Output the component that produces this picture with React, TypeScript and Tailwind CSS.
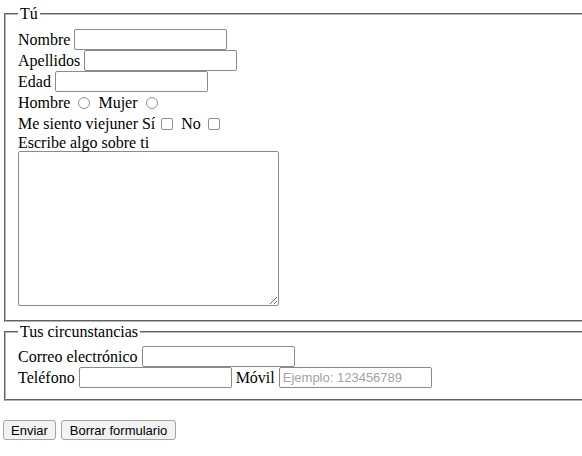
const field = "h-[21px] w-[153px] border border-[#8a8a8a] rounded-[2px] bg-white px-[3px] text-[13px] outline-none"

const radio = "appearance-none w-[12px] h-[12px] rounded-full border border-[#8e8e8e] bg-white"
const check = "appearance-none w-[12px] h-[12px] rounded-[2px] border border-[#8e8e8e] bg-white"

const Row = ({ children }: { children: React.ReactNode }) => (
  <div className="flex items-center h-[21px] whitespace-nowrap">{children}</div>
)

export default function App() {
  return (
    <div className="w-[582px] h-[456px] overflow-hidden bg-white text-black text-[16px] leading-[18px] font-['Liberation_Serif','Times_New_Roman',serif]">
      <form>
        <fieldset className="ml-[4px] mt-[5px] w-[640px] border-2 border-[#b5b5b5] [border-style:groove] pl-[12px] pt-[6px] pb-[14px]">
          <legend className="px-[2px]">Tú</legend>
          <Row>
            <label htmlFor="nombre">Nombre</label>
            <input id="nombre" type="text" className={`ml-[4px] ${field}`} />
          </Row>
          <Row>
            <label htmlFor="apellidos">Apellidos</label>
            <input id="apellidos" type="text" className={`ml-[4px] ${field}`} />
          </Row>
          <Row>
            <label htmlFor="edad">Edad</label>
            <input id="edad" type="text" className={`ml-[4px] ${field}`} />
          </Row>
          <Row>
            <span>Hombre</span>
            <input type="radio" name="sexo" className={`ml-[8px] ${radio}`} />
            <span className="ml-[8px]">Mujer</span>
            <input type="radio" name="sexo" className={`ml-[8px] ${radio}`} />
          </Row>
          <Row>
            <span>Me siento viejuner Sí</span>
            <input type="checkbox" className={`ml-[6px] ${check}`} />
            <span className="ml-[8px]">No</span>
            <input type="checkbox" className={`ml-[7px] ${check}`} />
          </Row>
          <div className="h-[17px] leading-[17px]">
            <label htmlFor="sobre">Escribe algo sobre ti</label>
          </div>
          <textarea
            id="sobre"
            className="block w-[261px] h-[155px] border border-[#8a8a8a] rounded-[2px] bg-white outline-none"
          />
        </fieldset>

        <fieldset className="ml-[4px] mt-[1px] w-[640px] border-2 border-[#b5b5b5] [border-style:groove] pl-[12px] pt-[5px] pb-[11px]">
          <legend className="px-[2px]">Tus circunstancias</legend>
          <Row>
            <label htmlFor="correo">Correo electrónico</label>
            <input id="correo" type="email" className={`ml-[4px] ${field}`} />
          </Row>
          <Row>
            <label htmlFor="telefono">Teléfono</label>
            <input id="telefono" type="tel" className={`ml-[4px] ${field}`} />
            <label htmlFor="movil" className="ml-[4px]">Móvil</label>
            <input
              id="movil"
              type="tel"
              placeholder="Ejemplo: 123456789"
              className={`ml-[4px] ${field} font-['Liberation_Sans',Arial,sans-serif] placeholder:text-[#a3a3a3]`}
            />
          </Row>
        </fieldset>

        <div className="flex gap-[5px] ml-[3px] mt-[19px] font-['Liberation_Sans',Arial,sans-serif] text-[13px]">
          <button type="submit" className="h-[20px] w-[53px] border border-[#a5a5a5] rounded-[3px] bg-[#f2f2f2] leading-none">
            Enviar
          </button>
          <button type="reset" className="h-[20px] w-[115px] border border-[#a5a5a5] rounded-[3px] bg-[#f2f2f2] leading-none">
            Borrar formulario
          </button>
        </div>
      </form>
    </div>
  )
}
